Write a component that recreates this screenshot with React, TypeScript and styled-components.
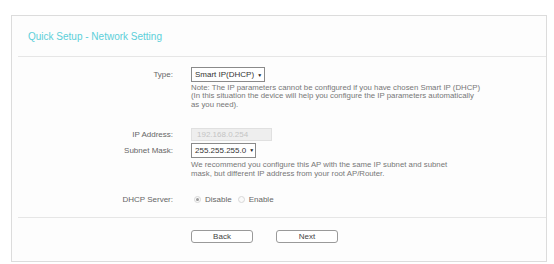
import React from "react";
import styled, { createGlobalStyle } from "styled-components";

const Global = createGlobalStyle`
  html, body { margin: 0; padding: 0; background: #ffffff; }
  body { font-family: "Liberation Sans", Arial, sans-serif; }
`;

const Panel = styled.div`
  margin: 15px 7px 0 11px;
  width: 534px;
  height: 245px;
  border: 1px solid #dcdcdc;
  background: #fdfdfd;
  display: flex;
  flex-direction: column;
`;

const Header = styled.div`
  height: 40px;
  margin-left: 6px;
  padding-left: 10px;
  border-bottom: 1px solid #e6e6e6;
  display: flex;
  align-items: center;
  font-size: 10px;
  color: #5ccfd9;
`;

const Body = styled.div`
  padding-top: 10px;
  display: flex;
  flex-direction: column;
`;

const Row = styled.div<{ $top?: number }>`
  display: grid;
  grid-template-columns: 161px 1fr;
  column-gap: 18px;
  align-items: start;
  margin-top: ${(p) => p.$top ?? 0}px;
`;

const Label = styled.div<{ $h: number }>`
  text-align: right;
  font-size: 8px;
  color: #666;
  line-height: ${(p) => p.$h}px;
`;

const Cell = styled.div`
  display: flex;
  flex-direction: column;
  align-items: flex-start;
`;

const SelectBox = styled.div<{ $w: number }>`
  box-sizing: border-box;
  width: ${(p) => p.$w}px;
  height: 15px;
  border: 1px solid #8a8a8a;
  background: #fff;
  font-size: 8px;
  color: #333;
  display: flex;
  align-items: center;
  padding-left: 3px;
  gap: 3px;
  white-space: nowrap;
`;

const Arrow = styled.span`
  font-size: 5px;
  color: #222;
`;

const Input = styled.div`
  box-sizing: border-box;
  width: 81px;
  height: 13px;
  border: 1px solid #e0e0e0;
  background: #eeeeee;
  font-size: 8px;
  color: #c4c4c4;
  display: flex;
  align-items: center;
  padding-left: 5px;
`;

const Note = styled.div<{ $lh: number }>`
  margin-top: 2px;
  font-size: 7.8px;
  line-height: ${(p) => p.$lh}px;
  color: #777;
  width: 300px;
`;

const Radios = styled.div`
  display: flex;
  align-items: center;
  height: 12px;
  font-size: 8px;
  color: #666;
`;

const Radio = styled.span<{ $on?: boolean }>`
  box-sizing: border-box;
  width: 7px;
  height: 7px;
  border-radius: 50%;
  border: 1px solid #d8d8d8;
  background: #fafafa;
  margin: 0 4px 0 3px;
  display: inline-flex;
  align-items: center;
  justify-content: center;
  &::after {
    content: "";
    width: 3px;
    height: 3px;
    border-radius: 50%;
    background: ${(p) => (p.$on ? "#9a9a9a" : "transparent")};
  }
`;

const RadioText = styled.span`
  margin-right: 3px;
`;

const Footer = styled.div`
  margin-top: 11px;
  margin-left: 6px;
  border-top: 1px solid #e6e6e6;
  padding: 12px 0 0 173px;
  display: flex;
  gap: 23px;
`;

const Button = styled.div`
  box-sizing: border-box;
  width: 62px;
  height: 13px;
  border: 1px solid #9a9a9a;
  border-radius: 3px;
  background: #fff;
  font-size: 8px;
  color: #444;
  display: flex;
  align-items: center;
  justify-content: center;
`;

export default function App() {
  return (
    <>
      <Global />
      <Panel>
        <Header>Quick Setup - Network Setting</Header>
        <Body>
          <Row>
            <Label $h={15}>Type:</Label>
            <Cell>
              <SelectBox $w={74}>
                Smart IP(DHCP) <Arrow>▼</Arrow>
              </SelectBox>
              <Note $lh={8.3}>
                Note: The IP parameters cannot be configured if you have chosen Smart IP (DHCP)
                <br />
                (In this situation the device will help you configure the IP parameters automatically
                <br />
                as you need).
              </Note>
            </Cell>
          </Row>
          <Row $top={19}>
            <Label $h={13}>IP Address:</Label>
            <Cell>
              <Input>192.168.0.254</Input>
            </Cell>
          </Row>
          <Row $top={2}>
            <Label $h={15}>Subnet Mask:</Label>
            <Cell>
              <SelectBox $w={65}>
                255.255.255.0 <Arrow>▼</Arrow>
              </SelectBox>
              <Note $lh={9}>
                We recommend you configure this AP with the same IP subnet and subnet
                <br />
                mask, but different IP address from your root AP/Router.
              </Note>
            </Cell>
          </Row>
          <Row $top={16}>
            <Label $h={12}>DHCP Server:</Label>
            <Radios>
              <Radio $on />
              <RadioText>Disable</RadioText>
              <Radio />
              <RadioText>Enable</RadioText>
            </Radios>
          </Row>
        </Body>
        <Footer>
          <Button>Back</Button>
          <Button>Next</Button>
        </Footer>
      </Panel>
    </>
  );
}
